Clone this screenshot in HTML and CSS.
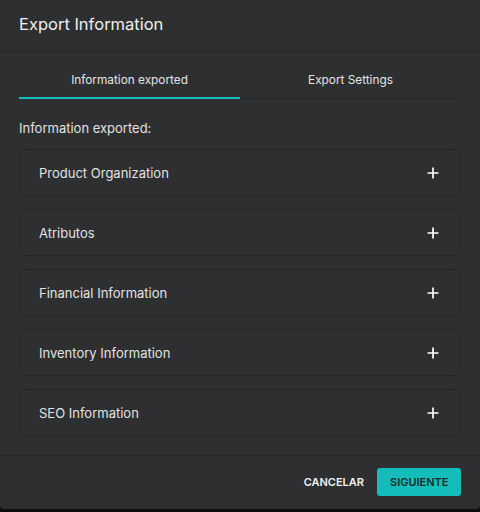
FILE: index.html
```html
<!DOCTYPE html>
<html>
<head>
<meta charset="utf-8">
<link rel="stylesheet" href="styles.css">
</head>
<body>
<div class="dialog">
  <header class="header">
    <h1 class="title">Export Information</h1>
  </header>
  <div class="content">
    <nav class="tabs">
      <div class="tab active">Information exported</div>
      <div class="tab">Export Settings</div>
    </nav>
    <p class="label">Information exported:</p>
    <div class="list">
      <div class="card"><span>Product Organization</span><svg class="plus" viewBox="0 0 12 12"><path d="M6 0.5v11M0.5 6h11"/></svg></div>
      <div class="card"><span>Atributos</span><svg class="plus" viewBox="0 0 12 12"><path d="M6 0.5v11M0.5 6h11"/></svg></div>
      <div class="card"><span>Financial Information</span><svg class="plus" viewBox="0 0 12 12"><path d="M6 0.5v11M0.5 6h11"/></svg></div>
      <div class="card"><span>Inventory Information</span><svg class="plus" viewBox="0 0 12 12"><path d="M6 0.5v11M0.5 6h11"/></svg></div>
      <div class="card"><span>SEO Information</span><svg class="plus" viewBox="0 0 12 12"><path d="M6 0.5v11M0.5 6h11"/></svg></div>
    </div>
  </div>
  <footer class="footer">
    <button class="btn btn-text">CANCELAR</button>
    <button class="btn btn-primary">SIGUIENTE</button>
  </footer>
</div>
</body>
</html>
```
FILE: styles.css
```css
* { box-sizing: border-box; }
html, body { margin: 0; padding: 0; }
body {
  background: #0e0e0f;
  font-family: Inter, "Noto Sans", sans-serif;
  width: 480px;
  height: 512px;
  overflow: hidden;
}
.dialog {
  width: 480px;
  height: 509px;
  background: #2e2f31;
  border-radius: 0 0 4px 4px;
  display: flex;
  flex-direction: column;
  color: #e4e4e4;
}
.header {
  height: 52px;
  border-bottom: 1px solid #232426;
  padding: 0 19px;
  display: flex;
  align-items: center;
}
.title {
  margin: 0;
  font-size: 16.5px;
  font-weight: 400;
  color: #eeeeee;
  padding-bottom: 4px;
}
.content {
  flex: 1;
  padding: 0 19px;
}
.tabs {
  display: flex;
  height: 47px;
  border-bottom: 1px solid #242528;
}
.tab {
  flex: 1;
  display: flex;
  align-items: center;
  justify-content: center;
  font-size: 11.8px;
  color: #e4e4e4;
  padding-top: 10px;
}
.tab.active {
  border-bottom: 2px solid #14bdb9;
  margin-bottom: -1px;
}
.label {
  margin: 21px 0 0;
  font-size: 13px;
  line-height: 16px;
  color: #e2e2e2;
}
.list {
  margin-top: 13px;
  display: flex;
  flex-direction: column;
  gap: 13px;
}
.card {
  height: 47px;
  border: 1px solid #25262a;
  border-radius: 8px;
  display: flex;
  align-items: center;
  justify-content: space-between;
  padding: 1px 21px 0 19px;
  font-size: 13px;
  color: #e2e2e2;
}
.plus {
  width: 12px;
  height: 12px;
  stroke: #ffffff;
  stroke-width: 1.7;
  fill: none;
}
.footer {
  height: 54px;
  border-top: 1px solid #232426;
  display: flex;
  justify-content: flex-end;
  align-items: center;
  gap: 13px;
  padding: 0 19px 2px 0;
}
.btn {
  font-family: Inter, "Noto Sans", sans-serif;
  font-size: 11px;
  font-weight: 600;
  border: none;
  border-radius: 3px;
  height: 28px;
  padding: 0 13px;
  cursor: pointer;
}
.btn-text {
  background: transparent;
  color: #f2f2f2;
  padding: 0 0;
}
.btn-primary {
  background: #14bdb9;
  color: #1e2b2c;
  width: 84px;
}
```
